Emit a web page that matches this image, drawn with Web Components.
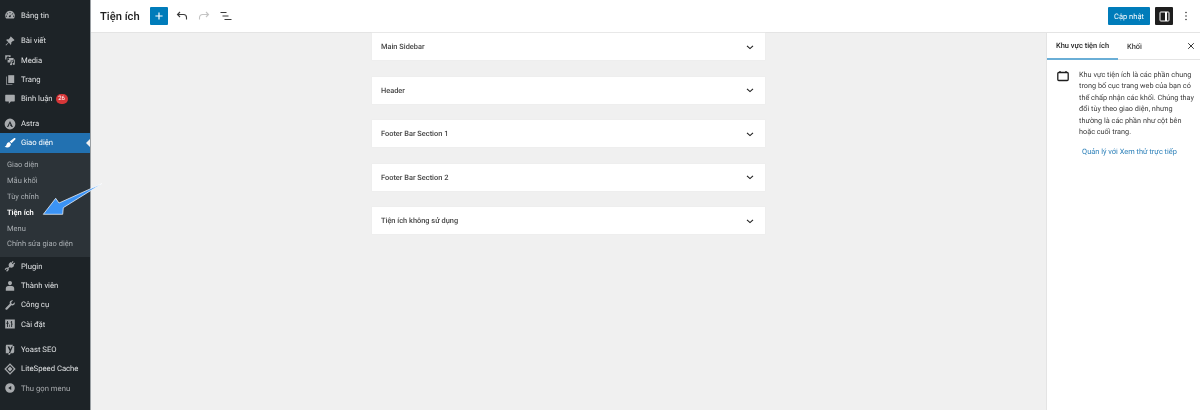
<!DOCTYPE html>
<html lang="vi">
<head>
<meta charset="utf-8">
<title>Tiện ích</title>
<style>
  html, body { margin: 0; height: 100%; overflow: hidden; }
  body { font-family: Roboto, "Open Sans", sans-serif; background: #f0f0f0; text-rendering: geometricPrecision; }
  .shell { display: flex; height: 410px; position: relative; will-change: transform; }
  .work { flex: 1; min-width: 0; display: flex; flex-direction: column; }
  .work-body { flex: 1; min-height: 0; display: flex; }
</style>
</head>
<body>

<div class="shell">
  <admin-menu>
    <menu-group>
      <menu-item icon="gauge">Bảng tin</menu-item>
    </menu-group>
    <menu-group style="margin-top:6.500px">
      <menu-item icon="pin">Bài viết</menu-item>
      <menu-item icon="media">Media</menu-item>
      <menu-item icon="page">Trang</menu-item>
      <menu-item icon="comment" badge="26">Bình luận</menu-item>
    </menu-group>
    <menu-group style="margin-top:5.500px">
      <menu-item icon="astra">Astra</menu-item>
      <menu-item icon="brush" current>Giao diện</menu-item>
      <sub-menu>
        <sub-item>Giao diện</sub-item>
        <sub-item>Mẫu khối</sub-item>
        <sub-item>Tùy chỉnh</sub-item>
        <sub-item current>Tiện ích</sub-item>
        <sub-item>Menu</sub-item>
        <sub-item>Chỉnh sửa giao diện</sub-item>
      </sub-menu>
    </menu-group>
    <menu-group>
      <menu-item icon="plug">Plugin</menu-item>
      <menu-item icon="user">Thành viên</menu-item>
      <menu-item icon="wrench">Công cụ</menu-item>
      <menu-item icon="settings">Cài đặt</menu-item>
    </menu-group>
    <menu-group style="margin-top:6px">
      <menu-item icon="yoast">Yoast SEO</menu-item>
      <menu-item icon="diamond">LiteSpeed Cache</menu-item>
      <menu-item icon="collapse" dim>Thu gọn menu</menu-item>
    </menu-group>
  </admin-menu>

  <div class="work">
    <editor-bar title="Tiện ích"></editor-bar>
    <div class="work-body">
      <widget-list>
        <widget-area>Main Sidebar</widget-area>
        <widget-area>Header</widget-area>
        <widget-area>Footer Bar Section 1</widget-area>
        <widget-area>Footer Bar Section 2</widget-area>
        <widget-area>Tiện ích không sử dụng</widget-area>
      </widget-list>
      <settings-panel>
        Khu vực tiện ích là các phần chung<br>
        trong bố cục trang web của bạn có<br>
        thể chấp nhận các khối. Chúng thay<br>
        đổi tùy theo giao diện, nhưng<br>
        thường là các phần như cột bên<br>
        hoặc cuối trang.
      </settings-panel>
    </div>
  </div>

  <pointer-arrow></pointer-arrow>
</div>

<script>
// dashicon-ish glyphs, 20x20 box
const MENU_ICONS = {
  gauge: '<path fill-rule="evenodd" d="M10 3a8 8 0 0 0-7.4 11c.3.7.8 1.5 1.3 2h12.2c.5-.5 1-1.300 1.300-2A8 8 0 0 0 10 3zm0 2a1 1 0 1 1 0 2 1 1 0 0 1 0-2zM5.500 7a1 1 0 1 1 0 2 1 1 0 0 1 0-2zm9 0a1 1 0 1 1 0 2 1 1 0 0 1 0-2zM4 11a1 1 0 1 1 0 2 1 1 0 0 1 0-2zm12 0a1 1 0 1 1 0 2 1 1 0 0 1 0-2zm-2.800-2.600-2.400 3a1.500 1.500 0 1 1-1.300-.600z"/>',
  pin: '<path d="M11.500 2.500l6 6-1.400 1.400-.9-.4-3.100 3.100c.4 1.500.1 2.900-.8 3.900L8 12.700 3.500 17.500l-1-1L7.300 12 3.500 8.200c1-.9 2.400-1.200 3.900-.8l3.100-3.100-.4-.9z"/>',
  media: '<path fill-rule="evenodd" d="M2 2h9v3H8.500L7.800 4H5.500L4.800 5.500 4 6v3l-2 0zM6 6.500h8l2 0V11h-5v3H6zM8.500 8.500a1.200 1.200 0 1 0 0 .1z"/><path d="M18 9v7.500a1.800 1.800 0 1 1-1.500-1.700V9zM12 12h3v1.500h-1.500V17a1.800 1.800 0 1 1-1.500-1.700z"/>',
  page: '<path d="M7 2h10v13H7z"/><path opacity=".75" d="M5 4v13h9v1.500H3.500V4z"/>',
  comment: '<path d="M3 3h14a1 1 0 0 1 1 1v9a1 1 0 0 1-1 1h-5.500L8 18v-4H3a1 1 0 0 1-1-1V4a1 1 0 0 1 1-1z"/>',
  astra: '<path fill-rule="evenodd" d="M10 1a9 9 0 1 0 0 18 9 9 0 0 0 0-18zm0 4 4.800 10h-2.300l-.9-2H9.800l1-2 -1-2.400-2.700 6.400H5z"/>',
  brush: '<path d="M19 2.500c-.8-.9-2-.8-3 0L9.500 7.300l3.100 3.200L18 5c1-1 1.800-1.700 1-2.500zM8.500 8.300 11.600 11.500c-.2 3-2.600 5.800-6 6-1.500.1-3.400-.6-4.600-1.500 1.800-.3 2.600-1 3-2.500.5-2.800 2-4.400 4.500-5.200z"/>',
  plug: '<path d="M14.500 1.500l1.500 1.500-2.800 2.800 1.200 1.200L17.200 4.200l1.400 1.500-2.800 2.700 1.200 1.300-1.500 1.500c-1.800 1.800-4.200 2-6 .8L7.500 14c1 1.200.6 2.500-.5 3.700L5 19.500 3.500 18l1.800-1.800c.5-.5.500-1 .2-1.300s-.8-.2-1.300.2L2.500 16.800 1 15.300 3 13.500c1.200-1.200 2.300-1.600 3.500-.7l2-2c-1.200-1.800-1-4.200.8-6L10.800 3.300l1.300 1.200z"/>',
  user: '<path d="M10 1.500c1.900 0 3.300 1.500 3.300 3.600 0 1.800-1.200 3.600-3.300 3.600S6.700 6.900 6.700 5.100c0-2.100 1.400-3.600 3.300-3.600zM7 10h6c2.500.5 4 1.800 4 4v4H3v-4c0-2.200 1.500-3.500 4-4z"/>',
  wrench: '<path d="M17.800 5.300c.5 1.500.2 3.100-1 4.300-1.200 1.200-3 1.500-4.500 1L5.500 17.500c-.7.700-1.900.7-2.700 0s-.7-2 0-2.700l6.900-6.800c-.5-1.500-.2-3.300 1-4.500 1.200-1.200 2.800-1.500 4.300-1L12 5.500l.5 2.300 2.300.5z"/>',
  settings: '<path fill-rule="evenodd" d="M2 2.500h16v15H2zM5 5v3H3.800v1.500H5V15h1.500V9.500h1.200V8H6.500V5zm7 0v1.200h-1V7.700h1V15h1.500V11h1V9.500h-1V5zM9 11v4h1v-4z"/>',
  yoast: '<path fill-rule="evenodd" d="M4 3h11l-1 2 3 0v9c0 2-1.500 3-3 3h-3l-1 2.500H7L8 17H3V6c0-2 1-3 1-3zm2 3 3.500 7.500-1.500 3H10.200L14.800 6H12.600l-1.900 4.600L8.800 6z"/>',
  diamond: '<path fill-rule="evenodd" d="M10 .5 19.500 10 10 19.500.5 10zM10 3.500 3.500 10l6.500 6.500 6.500-6.500zM10 6l4 4-4 4-4-4z"/>',
  collapse: '<path fill-rule="evenodd" d="M10 2a8 8 0 1 0 0 16 8 8 0 0 0 0-16zm2 4.500v7L7 10z"/>'
};

class AdminMenu extends HTMLElement {
  constructor() {
    super();
    this.attachShadow({ mode: 'open' }).innerHTML = `
      <style>
        :host {
          display: block;
          width: 91px; height: 100%; flex: none; box-sizing: border-box;
          padding-top: 5.500px; background: #1d2327;
          border-right: 1px solid #9a9fa3;
          font-size: 7.700px; color: #dfe1e3;
        }
      </style>
      <slot></slot>`;
  }
}

class MenuGroup extends HTMLElement {
  constructor() {
    super();
    this.attachShadow({ mode: 'open' }).innerHTML = `
      <style>:host { display: block; }</style><slot></slot>`;
  }
}

class MenuItem extends HTMLElement {
  connectedCallback() {
    if (this.shadowRoot) return;
    const icon = MENU_ICONS[this.getAttribute('icon')] || '';
    const badge = this.getAttribute('badge');
    this.attachShadow({ mode: 'open' }).innerHTML = `
      <style>
        :host {
          display: flex; align-items: center; position: relative;
          height: 19.300px; padding-left: 4px; white-space: nowrap;
        }
        svg { width: 12px; height: 12px; fill: #a7aaad; flex: none; margin-right: 5px; }
        .badge {
          margin-left: 3px; min-width: 12px; height: 10px; border-radius: 5px;
          background: #d63638; color: #fff; font-size: 6px; line-height: 10px; text-align: center;
        }
        :host([current]) { background: #2271b1; color: #fff; }
        :host([current]) svg { fill: #fff; }
        :host([current])::after {
          content: ""; position: absolute; right: 0; top: 5.500px;
          border: 4px solid transparent; border-right-color: #f0f0f0; border-left: 0;
        }
        :host([dim]) { color: #a7aaad; }
      </style>
      <svg viewBox="0 0 20 20">${icon}</svg>
      <slot></slot>
      ${badge ? `<span class="badge">${badge}</span>` : ''}`;
  }
}

class SubMenu extends HTMLElement {
  constructor() {
    super();
    this.attachShadow({ mode: 'open' }).innerHTML = `
      <style>
        :host {
          display: flex; flex-direction: column;
          padding: 4px 0; background: #2c3338; height: 104px; box-sizing: border-box;
        }
      </style>
      <slot></slot>`;
  }
}

class SubItem extends HTMLElement {
  constructor() {
    super();
    this.attachShadow({ mode: 'open' }).innerHTML = `
      <style>
        :host {
          display: flex; align-items: center; height: 15.900px; padding-left: 7px;
          font-size: 7.500px; color: #a9aeb2; white-space: nowrap;
        }
        :host([current]) { color: #fff; font-weight: 600; }
      </style>
      <slot></slot>`;
  }
}

class EditorBar extends HTMLElement {
  connectedCallback() {
    if (this.shadowRoot) return;
    this.attachShadow({ mode: 'open' }).innerHTML = `
      <style>
        :host {
          display: flex; align-items: center; flex: none; height: 33px; box-sizing: border-box;
          padding: 0 8px 0 9px; background: #fff; border-bottom: 1px solid #e4e4e4; color: #1e1e1e;
        }
        h1 { margin: 0 15px 0 0; font-size: 11.200px; font-weight: 500; width: 35px; white-space: nowrap; }
        .add {
          width: 18px; height: 18px; border-radius: 1px; background: #007cba;
          display: flex; align-items: center; justify-content: center;
        }
        .add svg { width: 8px; height: 8px; stroke: #fff; stroke-width: 1.500; fill: none; }
        .tool { width: 12px; height: 12px; margin-left: 8px; fill: none; stroke: #3a3a3a; stroke-width: 1.100; }
        .tool.off { stroke: #c4c4c4; margin-left: 10px; }
        .tool.list { margin-left: 10px; }
        .space { flex: 1; }
        .save {
          height: 18px; width: 42px; border-radius: 1px; background: #007cba; color: #fff;
          font-size: 7.500px; display: flex; align-items: center; justify-content: center;
        }
        .toggle {
          width: 18px; height: 18px; margin-left: 5px; border-radius: 1px; background: #1e1e1e;
          display: flex; align-items: center; justify-content: center;
        }
        .toggle svg { width: 11px; height: 11px; }
        .more { width: 12px; height: 12px; margin-left: 7px; fill: #3a3a3a; }
      </style>
      <h1>${this.getAttribute('title')}</h1>
      <span class="add"><svg viewBox="0 0 10 10"><path d="M5 0.500v9M.5 5h9"/></svg></span>
      <svg class="tool" viewBox="0 0 12 12"><path d="M4 2 1.500 4.500 4 7M1.500 4.500H7.500a3 3 0 0 1 3 3V9.500"/></svg>
      <svg class="tool off" viewBox="0 0 12 12"><path d="M8 2l2.500 2.500L8 7M10.500 4.500H4.500a3 3 0 0 0-3 3V9.500"/></svg>
      <svg class="tool list" viewBox="0 0 12 12"><path d="M.5 2.500h6M2.500 6h6M4.500 9.500h7"/></svg>
      <span class="space"></span>
      <span class="save">Cập nhật</span>
      <span class="toggle"><svg viewBox="0 0 11 11" fill="none" stroke="#fff"><rect x="1" y="1" width="9" height="9" rx=".8"/><path d="M7 1v9" stroke-width="2"/></svg></span>
      <svg class="more" viewBox="0 0 12 12"><circle cx="6" cy="2.500" r=".8"/><circle cx="6" cy="6" r=".8"/><circle cx="6" cy="9.500" r=".8"/></svg>`;
  }
}

class WidgetList extends HTMLElement {
  constructor() {
    super();
    this.attachShadow({ mode: 'open' }).innerHTML = `
      <style>
        :host {
          flex: 1; min-width: 0; display: flex; flex-direction: column; align-items: center;
          gap: 16.600px; background: #f0f0f0;
        }
      </style>
      <slot></slot>`;
  }
}

class WidgetArea extends HTMLElement {
  constructor() {
    super();
    this.attachShadow({ mode: 'open' }).innerHTML = `
      <style>
        :host {
          display: flex; align-items: center; justify-content: space-between;
          width: 393px; height: 27px; box-sizing: border-box; padding: 0 10px 0 9px;
          background: #fff; font-size: 7.400px; font-weight: 500; color: #454545;
          box-shadow: 0 0 0 .5px #ececec;
        }
        svg { width: 10px; height: 10px; fill: none; stroke: #1e1e1e; stroke-width: 1.100; }
      </style>
      <slot></slot>
      <svg viewBox="0 0 10 10"><path d="M2 3.800 5 6.600l3-2.800"/></svg>`;
  }
}

class SettingsPanel extends HTMLElement {
  constructor() {
    super();
    this.attachShadow({ mode: 'open' }).innerHTML = `
      <style>
        :host {
          display: block; flex: none; width: 154px; box-sizing: border-box;
          background: #fff; border-left: 1px solid #e4e4e4; color: #1e1e1e;
        }
        .tabs {
          display: flex; align-items: center; height: 26px; border-bottom: 1px solid #e4e4e4;
          font-size: 7.450px; font-weight: 500; position: relative;
        }
        .tab { height: 100%; box-sizing: border-box; display: flex; align-items: center; white-space: nowrap; }
        .tab.on { width: 71px; border-bottom: 2px solid #6aaed6; margin-bottom: -1px; height: 27px; justify-content: center; }
        .tab.off { color: #3c3c3c; padding-left: 9px; }
        .close { margin-left: auto; margin-right: 5px; width: 8px; height: 8px; stroke: #1e1e1e; stroke-width: 1.100; fill: none; }
        .body { display: flex; padding: 9px 0 0 10px; gap: 10px; }
        .cal { width: 12px; height: 12px; flex: none; margin-top: 1px; fill: none; stroke: #1e1e1e; stroke-width: 1.300; }
        p { margin: 0; white-space: nowrap; font-size: 7.300px; line-height: 11.400px; color: #3a3a3a; }
        a { display: block; text-align: center; margin-top: 10px; font-size: 7.400px; color: #2a7fb8; text-decoration: none; padding-left: 12px; }
      </style>
      <div class="tabs">
        <span class="tab on">Khu vực tiện ích</span>
        <span class="tab off">Khối</span>
        <svg class="close" viewBox="0 0 10 10"><path d="M1.500 1.500l7 7M8.500 1.500l-7 7"/></svg>
      </div>
      <div class="body">
        <svg class="cal" viewBox="0 0 12 12"><rect x=".8" y="2.500" width="10.400" height="8" rx="1"/><path d="M3 1v1.500M9 1v1.500"/></svg>
        <p><slot></slot></p>
      </div>
      <a href="#">Quản lý với Xem thử trực tiếp</a>`;
  }
}

// annotation drawn on top of the screenshot
class PointerArrow extends HTMLElement {
  constructor() {
    super();
    this.attachShadow({ mode: 'open' }).innerHTML = `
      <style>
        :host { position: absolute; left: 40px; top: 178px; width: 68px; height: 40px; pointer-events: none; }
        svg { display: block; width: 100%; height: 100%; }
      </style>
      <svg viewBox="0 0 68 40">
        <path d="M3.300 36.300 15.700 20.300 19 25 61.700 5.700 23.300 29.700 22.700 36.300z" fill="#3b93f5" stroke="#fff" stroke-width=".7" stroke-linejoin="round"/>
      </svg>`;
  }
}

customElements.define('admin-menu', AdminMenu);
customElements.define('menu-group', MenuGroup);
customElements.define('menu-item', MenuItem);
customElements.define('sub-menu', SubMenu);
customElements.define('sub-item', SubItem);
customElements.define('editor-bar', EditorBar);
customElements.define('widget-list', WidgetList);
customElements.define('widget-area', WidgetArea);
customElements.define('settings-panel', SettingsPanel);
customElements.define('pointer-arrow', PointerArrow);
</script>
</body>
</html>
